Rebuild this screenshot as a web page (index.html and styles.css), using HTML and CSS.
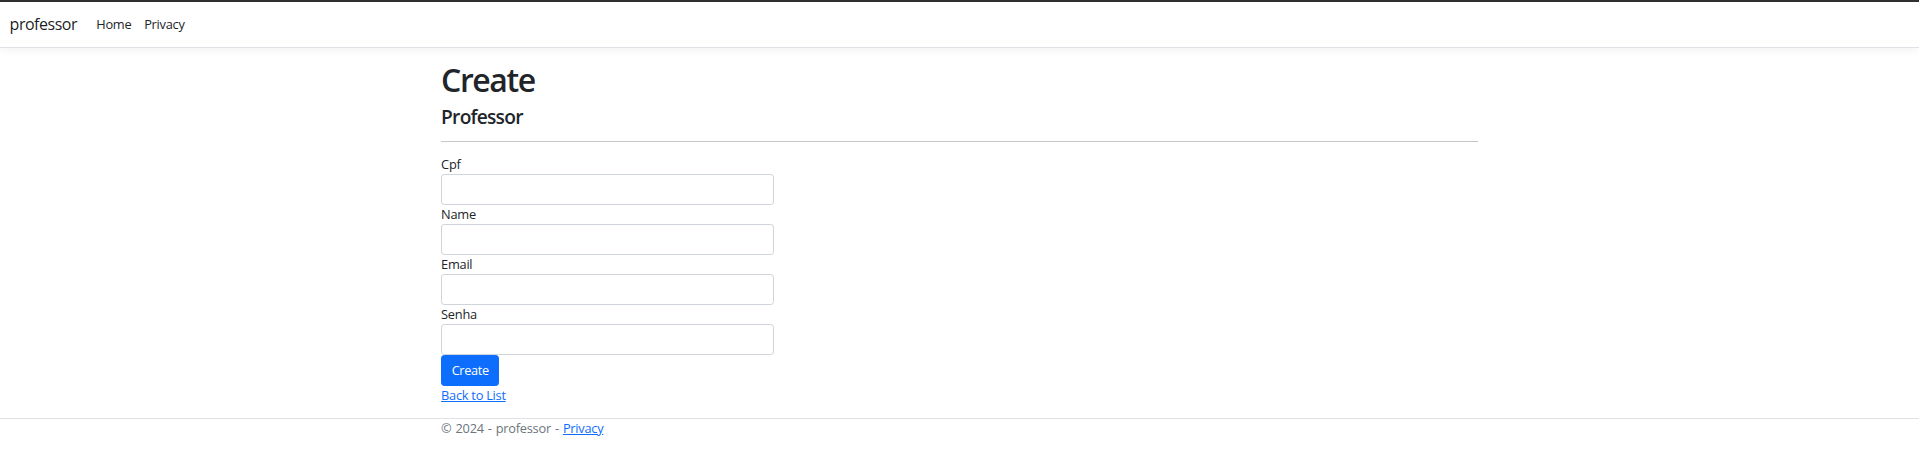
FILE: index.html
```html
<!DOCTYPE html>
<html lang="en">
<head>
<meta charset="utf-8">
<title>Create - professor</title>
<link rel="stylesheet" href="styles.css">
</head>
<body>
<header class="topbar">
  <nav class="navbar">
    <a class="brand" href="#">professor</a>
    <ul class="nav">
      <li><a class="nav-link" href="#">Home</a></li>
      <li><a class="nav-link" href="#">Privacy</a></li>
    </ul>
  </nav>
</header>
<main class="container">
  <h1 class="title">Create</h1>
  <h4 class="subtitle">Professor</h4>
  <hr class="rule">
  <form class="form">
    <div class="group">
      <label class="label" for="cpf">Cpf</label>
      <input class="control" id="cpf" type="text">
    </div>
    <div class="group">
      <label class="label" for="name">Name</label>
      <input class="control" id="name" type="text">
    </div>
    <div class="group">
      <label class="label" for="email">Email</label>
      <input class="control" id="email" type="text">
    </div>
    <div class="group">
      <label class="label" for="senha">Senha</label>
      <input class="control" id="senha" type="text">
    </div>
    <div class="group">
      <button class="btn" type="button">Create</button>
    </div>
  </form>
  <div class="back"><a class="link" href="#">Back to List</a></div>
</main>
<footer class="footer">
  <div class="container footer-inner">&copy; 2024 - professor - <a class="link" href="#">Privacy</a></div>
</footer>
</body>
</html>
```

FILE: styles.css
```css
* { box-sizing: border-box; }
html, body { margin: 0; padding: 0; }
body {
  font-family: "Open Sans", "Liberation Sans", sans-serif;
  font-size: 12.8px;
  line-height: 1.5;
  letter-spacing: -0.02em;
  color: #212529;
  background: #fff;
  border-top: 2px solid #2f2f2f;
}
.topbar {
  margin-bottom: 12.8px;
}
.navbar {
  display: flex;
  align-items: center;
  padding: 6.4px 9.6px;
  border-bottom: 1px solid #dee2e6;
  box-shadow: 0 3.2px 9.6px rgba(0,0,0,.05);
  background: #fff;
}
.brand {
  font-size: 16px;
  line-height: 24px;
  padding: 4px 0;
  margin-right: 12.8px;
  letter-spacing: -0.03em;
  color: rgba(0,0,0,.9);
  text-decoration: none;
}
.nav {
  display: flex;
  list-style: none;
  margin: 0;
  padding: 0;
}
.nav-link {
  display: block;
  padding: 6.4px 6.4px;
  color: #212529;
  text-decoration: none;
}
.container {
  width: 1056px;
  margin: 0 auto;
  padding: 0 9.6px;
}
main.container { padding-bottom: 12.8px; }
.title {
  margin: 0 0 6.4px;
  font-size: 32px;
  font-weight: 600;
  line-height: 1.2;
  letter-spacing: -0.045em;
}
.subtitle {
  margin: 0 0 6.4px;
  font-size: 19.2px;
  font-weight: 600;
  line-height: 1.2;
  letter-spacing: -0.04em;
}
.rule {
  margin: 12.8px 0;
  border: 0;
  border-top: 1px solid #c6c7c8;
}
.form { width: 332.8px; }
.label { display: inline-block; }
.control {
  display: block;
  width: 100%;
  padding: 4.8px 9.6px;
  font: inherit;
  line-height: 1.5;
  color: #212529;
  background: #fff;
  border: 1px solid #ced4da;
  border-radius: 3.2px;
}
.btn {
  display: inline-block;
  padding: 4.8px 9.6px;
  font: inherit;
  line-height: 1.5;
  letter-spacing: -0.03em;
  color: #fff;
  background: #0d6efd;
  border: 1px solid #0d6efd;
  border-radius: 3.2px;
}
.link { color: #0d6efd; text-decoration: underline; }
.footer {
  border-top: 1px solid #dee2e6;
  color: #6c757d;
  white-space: nowrap;
}
.footer-inner { word-spacing: 1px; }
```
